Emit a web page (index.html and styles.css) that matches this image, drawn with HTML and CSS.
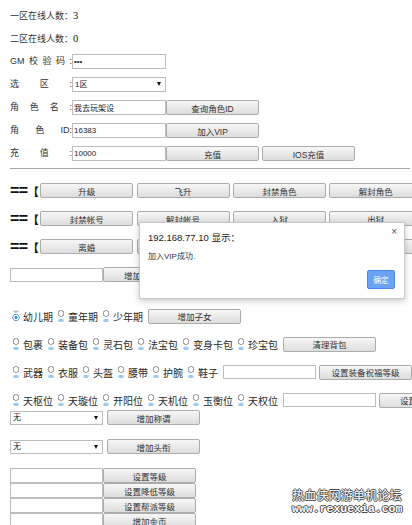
FILE: index.html
```html
<!DOCTYPE html>
<html lang="zh-CN">
<head>
    <meta charset="UTF-8">
    <meta name="viewport" content="width=device-width, initial-scale=1.0">
    <title>GM管理后台</title>
    <link rel="stylesheet" href="styles.css">
</head>
<body>
    <div class="page">
        <p class="stat">一区在线人数：<span class="num">3</span></p>
        <p class="stat">二区在线人数：<span class="num">0</span></p>

        <div class="field">
            <label class="key"><span>GM</span><span>校</span><span>验</span><span>码</span><span>:</span></label>
            <input type="password" class="box" value="abc">
        </div>
        <div class="field">
            <label class="key"><span>选</span><span>区</span><span>:</span></label>
            <div class="pick wide">
                <select>
                    <option>1区</option>
                    <option>2区</option>
                </select>
            </div>
        </div>
        <div class="field">
            <label class="key"><span>角</span><span>色</span><span>名</span><span>:</span></label>
            <input type="text" class="box" value="我去玩架设">
            <button class="btn">查询角色ID</button>
        </div>
        <div class="field">
            <label class="key"><span>角</span><span>色</span><span>ID:</span></label>
            <input type="text" class="box" value="16383">
            <button class="btn">加入VIP</button>
        </div>
        <div class="field">
            <label class="key"><span>充</span><span>值</span><span>:</span></label>
            <input type="text" class="box" value="10000">
            <button class="btn">充值</button>
            <button class="btn gap">IOS充值</button>
        </div>

        <hr class="rule">

        <div class="ops">
            <div class="ops-row">
                <span class="mark">==<b>【</b></span>
                <button class="btn">升级</button>
                <button class="btn">飞升</button>
                <button class="btn">封禁角色</button>
                <button class="btn">解封角色</button>
            </div>
            <div class="ops-row">
                <span class="mark">==<b>【</b></span>
                <button class="btn">封禁帐号</button>
                <button class="btn">解封帐号</button>
                <button class="btn">入狱</button>
                <button class="btn">出狱</button>
            </div>
            <div class="ops-row">
                <span class="mark">==<b>【</b></span>
                <button class="btn">离婚</button>
                <button class="btn">清除密码</button>
                <button class="btn">踢下线</button>
                <button class="btn">删除角色</button>
            </div>
            <div class="ops-row">
                <input type="text" class="box short">
                <button class="btn">增加帮派贡献</button>
            </div>
        </div>

        <div class="choices">
            <div class="choice-row">
                <input type="radio" name="age" checked><label>幼儿期</label>
                <input type="radio" name="age"><label>童年期</label>
                <input type="radio" name="age"><label>少年期</label>
                <button class="btn gap">增加子女</button>
            </div>
            <div class="choice-row">
                <input type="radio" name="bag"><label>包裹</label>
                <input type="radio" name="bag"><label>装备包</label>
                <input type="radio" name="bag"><label>灵石包</label>
                <input type="radio" name="bag"><label>法宝包</label>
                <input type="radio" name="bag"><label>变身卡包</label>
                <input type="radio" name="bag"><label>珍宝包</label>
                <button class="btn gap">清理背包</button>
            </div>
            <div class="choice-row">
                <input type="radio" name="equip"><label>武器</label>
                <input type="radio" name="equip"><label>衣服</label>
                <input type="radio" name="equip"><label>头盔</label>
                <input type="radio" name="equip"><label>腰带</label>
                <input type="radio" name="equip"><label>护腕</label>
                <input type="radio" name="equip"><label>鞋子</label>
                <input type="text" class="box short gap">
                <button class="btn gap">设置装备祝福等级</button>
            </div>
            <div class="choice-row">
                <input type="radio" name="star"><label>天枢位</label>
                <input type="radio" name="star"><label>天璇位</label>
                <input type="radio" name="star"><label>开阳位</label>
                <input type="radio" name="star"><label>天机位</label>
                <input type="radio" name="star"><label>玉衡位</label>
                <input type="radio" name="star"><label>天权位</label>
                <input type="text" class="box short gap">
                <button class="btn gap">设置星位等级</button>
            </div>
        </div>

        <div class="titles">
            <div class="title-row">
                <div class="pick">
                    <select><option>无</option></select>
                </div>
                <button class="btn gap">增加称谓</button>
            </div>
            <div class="title-row">
                <div class="pick">
                    <select><option>无</option></select>
                </div>
                <button class="btn gap">增加头衔</button>
            </div>
        </div>

        <div class="stack">
            <div class="stack-row"><input type="text" class="box short"><button class="btn">设置等级</button></div>
            <div class="stack-row"><input type="text" class="box short"><button class="btn">设置降低等级</button></div>
            <div class="stack-row"><input type="text" class="box short"><button class="btn">设置帮派等级</button></div>
            <div class="stack-row"><input type="text" class="box short"><button class="btn">增加金币</button></div>
        </div>

        <div class="watermark">
            <div class="wm-name">热血侠网游单机论坛</div>
            <div class="wm-url">www.rexuexia.com</div>
        </div>

        <!-- alert() popup -->
        <div class="dialog">
            <span class="dialog-close">×</span>
            <div class="dialog-title">192.168.77.10 显示：</div>
            <div class="dialog-text">加入VIP成功.</div>
            <button class="dialog-ok">确定</button>
        </div>
    </div>
</body>
</html>
```

FILE: styles.css
```css
* {
    margin: 0;
    padding: 0;
    box-sizing: border-box;
}

body {
    font-family: 'Liberation Sans', 'Noto Sans CJK SC', sans-serif;
    font-size: 9px;
    color: #333;
    background: #fff;
}

.page {
    position: relative;
    height: 525px;
    overflow: hidden;
    padding: 4px 0 0 10px;
}

/* rows never squeeze their controls, they just run off the right edge */
.field > *,
.ops-row > *,
.choice-row > *,
.title-row > *,
.stack-row > * {
    flex-shrink: 0;
}

/* top form */
.stat,
.field {
    display: flex;
    align-items: center;
    height: 23px;
}

.num {
    font-family: 'Liberation Serif', serif;
    font-size: 10.5px;
    color: #111;
}

.key {
    width: 62px;
    display: flex;
    justify-content: space-between;
    align-items: baseline;
    line-height: 13px;
}

.box {
    width: 94px;
    height: 15px;
    border: 1px solid #bdbdbd;
    background: #fff;
    font-family: inherit;
    font-size: 8px;
    color: #222;
    padding: 0 1px;
    outline: none;
}

.box.short {
    width: 93px;
    height: 14px;
}

.btn {
    width: 93px;
    height: 15px;
    border: 1px solid #acacac;
    border-radius: 2px;
    background: linear-gradient(#f7f7f7, #dddddd);
    font-family: inherit;
    font-size: 8.5px;
    color: #333;
}

.gap {
    margin-left: 3px;
}

.pick {
    position: relative;
    width: 93px;
    height: 14px;
}

.pick.wide {
    width: 94px;
    height: 15px;
}

.pick select {
    width: 100%;
    height: 100%;
    appearance: none;
    border: 1px solid #bdbdbd;
    border-radius: 0;
    background: #fff;
    font-family: inherit;
    font-size: 8px;
    color: #222;
    padding-left: 2px;
}

.pick::after {
    content: "";
    position: absolute;
    right: 5px;
    top: 5px;
    border-left: 2.5px solid transparent;
    border-right: 2.5px solid transparent;
    border-top: 4px solid #111;
}

.rule {
    border: 0;
    border-top: 1px solid #a8a8a8;
    margin: 3px 2px 0 0;
}

/* action buttons */
.ops {
    margin-top: 7.5px;
}

.ops-row {
    display: flex;
    align-items: center;
    gap: 3.3px;
    height: 28px;
}

.mark {
    width: 27px;
    font-family: 'Liberation Sans', sans-serif;
    font-size: 16px;
    font-weight: bold;
    color: #111;
    white-space: nowrap;
    letter-spacing: -0.5px;
    line-height: 15px;
}

.mark b {
    font-family: 'Noto Sans CJK SC', sans-serif;
    font-size: 11px;
    letter-spacing: 0;
}

.ops-row .box + .btn {
    margin-left: -3.3px;
}

/* radio groups */
.choices {
    margin-top: 19.5px;
    display: flex;
    flex-direction: column;
    gap: 12px;
}

.choice-row {
    display: flex;
    align-items: center;
    height: 16px;
}

.choice-row label {
    font-size: 10px;
    color: #2a2a2a;
    margin-right: 2px;
    white-space: nowrap;
}

input[type="radio"] {
    appearance: none;
    width: 8px;
    height: 12px;
    margin: 0 3px 0 2px;
    background:
        radial-gradient(circle at 50% 3.5px, #fff 2.1px, #a4a4a4 2.5px, #a4a4a4 3.1px, transparent 3.6px),
        radial-gradient(3.6px 2.2px at 50% 10.5px, #9cc9ee 55%, transparent 100%);
}

input[type="radio"]:checked {
    background:
        radial-gradient(circle at 50% 7.5px, #3f8ede 1.3px, #fff 1.8px, #fff 2.4px, #6aa8e2 2.8px, #6aa8e2 3.4px, transparent 3.9px),
        radial-gradient(3.5px 1.6px at 50% 1.5px, #c4c4c4 55%, transparent 100%);
}

/* titles */
.titles {
    margin-top: 2px;
    display: flex;
    flex-direction: column;
    gap: 14px;
}

.title-row {
    display: flex;
    align-items: center;
}

.title-row .btn {
    margin-left: 4px;
}

.stack {
    margin-top: 14px;
}

.stack-row {
    display: flex;
    height: 15px;
}

.stack-row .box {
    height: 15px;
}

/* site stamp over the page corner */
.watermark {
    position: absolute;
    left: 292px;
    top: 488px;
    color: #fff;
    text-shadow: 1px 0 #4a4a4a, -1px 0 #4a4a4a, 0 1px #4a4a4a, 0 -1px #4a4a4a;
}

.wm-name {
    font-family: 'Noto Sans CJK SC', sans-serif;
    font-size: 12px;
    line-height: 14px;
    letter-spacing: 0.2px;
}

.wm-url {
    font-family: 'Liberation Mono', monospace;
    font-size: 11.5px;
    line-height: 13px;
    font-weight: bold;
}

/* alert box */
.dialog {
    position: absolute;
    left: 139px;
    top: 222px;
    width: 266px;
    height: 77px;
    background: #fff;
    border: 1px solid #c9c9c9;
    box-shadow: 0 2px 6px rgba(0, 0, 0, 0.22);
    padding: 9px 0 0 8px;
}

.dialog-close {
    position: absolute;
    right: 7px;
    top: 3px;
    font-size: 10px;
    color: #555;
}

.dialog-title {
    font-size: 9.5px;
    color: #222;
    line-height: 12px;
}

.dialog-text {
    margin-top: 8px;
    font-size: 8px;
    color: #333;
    line-height: 10px;
}

.dialog-ok {
    position: absolute;
    left: 227px;
    top: 47px;
    width: 28px;
    height: 19px;
    border: 1px solid #4c89e6;
    border-radius: 2px;
    background: #6aa2f4;
    color: #fff;
    font-family: inherit;
    font-size: 7.5px;
}
```
